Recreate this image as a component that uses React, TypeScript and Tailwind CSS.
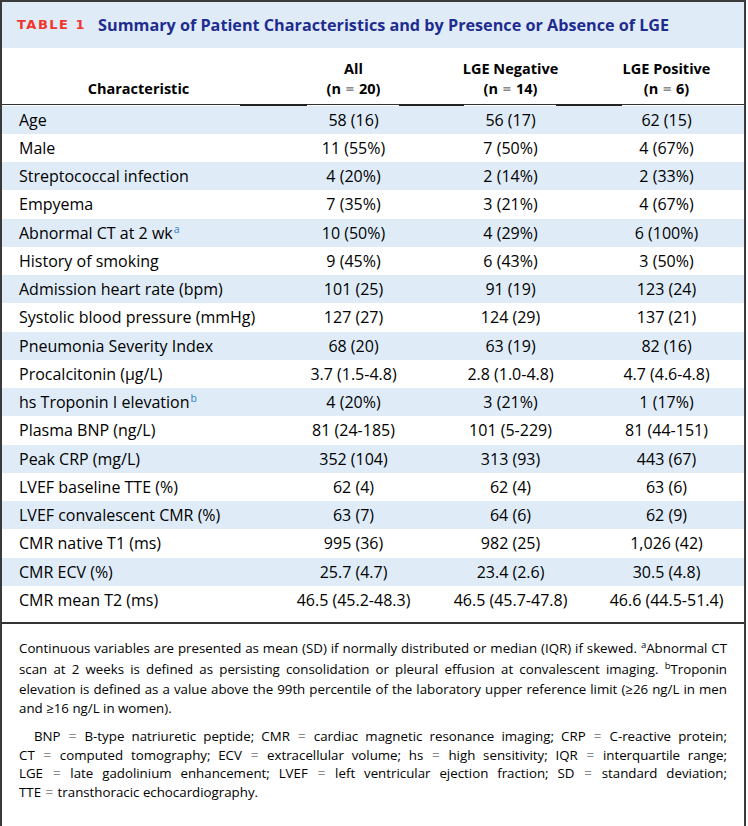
import React from "react";

const Sup = ({ c }: { c: string }) => (
  <span className="text-[10.5px] text-[#2f7fc4] relative -top-[6px] ml-[1px]">{c}</span>
);

const rows: [React.ReactNode, string, string, string][] = [
  ["Age", "58 (16)", "56 (17)", "62 (15)"],
  ["Male", "11 (55%)", "7 (50%)", "4 (67%)"],
  ["Streptococcal infection", "4 (20%)", "2 (14%)", "2 (33%)"],
  ["Empyema", "7 (35%)", "3 (21%)", "4 (67%)"],
  [
    <>
      Abnormal CT at 2 wk<Sup c="a" />
    </>,
    "10 (50%)",
    "4 (29%)",
    "6 (100%)",
  ],
  ["History of smoking", "9 (45%)", "6 (43%)", "3 (50%)"],
  ["Admission heart rate (bpm)", "101 (25)", "91 (19)", "123 (24)"],
  ["Systolic blood pressure (mmHg)", "127 (27)", "124 (29)", "137 (21)"],
  ["Pneumonia Severity Index", "68 (20)", "63 (19)", "82 (16)"],
  ["Procalcitonin (\u00b5g/L)", "3.7 (1.5-4.8)", "2.8 (1.0-4.8)", "4.7 (4.6-4.8)"],
  [
    <>
      hs Troponin I elevation<Sup c="b" />
    </>,
    "4 (20%)",
    "3 (21%)",
    "1 (17%)",
  ],
  ["Plasma BNP (ng/L)", "81 (24-185)", "101 (5-229)", "81 (44-151)"],
  ["Peak CRP (mg/L)", "352 (104)", "313 (93)", "443 (67)"],
  ["LVEF baseline TTE (%)", "62 (4)", "62 (4)", "63 (6)"],
  ["LVEF convalescent CMR (%)", "63 (7)", "64 (6)", "62 (9)"],
  ["CMR native T1 (ms)", "995 (36)", "982 (25)", "1,026 (42)"],
  ["CMR ECV (%)", "25.7 (4.7)", "23.4 (2.6)", "30.5 (4.8)"],
  ["CMR mean T2 (ms)", "46.5 (45.2-48.3)", "46.5 (45.7-47.8)", "46.6 (44.5-51.4)"],
];

const Eq = () => <span className="text-[#8a8a8a] px-[1px]">=</span>;
const FSup = ({ c }: { c: string }) => <span className="text-[9.5px] relative -top-[5px]">{c}</span>;

const J = ({ children, last = true }: { children: React.ReactNode; last?: boolean }) => (
  <div className={`whitespace-nowrap text-justify ${last ? "[text-align-last:justify]" : ""}`}>{children}</div>
);

export default function App() {
  return (
    <div
      className="w-[746px] border-2 border-[#3a3a3a] bg-white text-black"
      style={{ fontFamily: '"Open Sans", "Noto Sans", sans-serif' }}
    >
      {/* Title band */}
      <div className="h-[46px] bg-[#dfecf8] flex items-center pl-[15px] gap-[12px]">
        <span
          className="text-[#f2352b] font-bold text-[13px] tracking-[1.5px]"
          style={{ fontFamily: '"DejaVu Sans", sans-serif' }}
        >
          TABLE 1
        </span>
        <span className="text-[#1f2c8f] font-bold text-[16.2px]">
          Summary of Patient Characteristics and by Presence or Absence of LGE
        </span>
      </div>

      {/* Header row */}
      <div className="h-[55.5px] flex font-bold text-[14.5px] leading-[20px]">
        <div className="w-[273px] flex items-end justify-center pb-[5px]">Characteristic</div>
        <div className="w-[157px] flex flex-col items-center justify-end pb-[5px]">
          <span>All</span>
          <span>
            (n <Eq /> 20)
          </span>
        </div>
        <div className="w-[157px] flex flex-col items-center justify-end pb-[5px]">
          <span>LGE Negative</span>
          <span>
            (n <Eq /> 14)
          </span>
        </div>
        <div className="w-[155px] flex flex-col items-center justify-end pb-[5px]">
          <span>LGE Positive</span>
          <span>
            (n <Eq /> 6)
          </span>
        </div>
      </div>
      <div className="h-[2px] flex items-start">
        <div className="w-[238px] h-[1px] bg-[#333]" />
        <div className="w-[67px] h-[2px] bg-[#222]" />
        <div className="w-[92px] h-[1px] bg-[#333]" />
        <div className="w-[65px] h-[2px] bg-[#222]" />
        <div className="w-[92px] h-[1px] bg-[#333]" />
        <div className="w-[66px] h-[2px] bg-[#222]" />
        <div className="flex-1 h-[1px] bg-[#333]" />
      </div>

      {/* Body rows */}
      <div className="pb-[8px] border-b-2 border-[#333] text-[16px]">
        {rows.map((r, i) => (
          <div
            key={i}
            className={`h-[28.25px] flex items-center ${i % 2 === 0 ? "bg-[#dfecf8]" : "bg-white"}`}
          >
            <div className="w-[273px] pl-[17px] whitespace-nowrap">{r[0]}</div>
            <div className="w-[157px] text-center">{r[1]}</div>
            <div className="w-[157px] text-center">{r[2]}</div>
            <div className="w-[155px] text-center">{r[3]}</div>
          </div>
        ))}
      </div>

      {/* Footer */}
      <div className="px-[17px] pt-[15px] pb-[28px] text-[13.3px] leading-[18.7px]">
        <div>
          <J>
            Continuous variables are presented as mean (SD) if normally distributed or median (IQR) if skewed.{" "}
            <FSup c="a" />
            Abnormal CT
          </J>
          <J>
            scan at 2 weeks is defined as persisting consolidation or pleural effusion at convalescent imaging.{" "}
            <FSup c="b" />
            Troponin
          </J>
          <J>
            elevation is defined as a value above the 99th percentile of the laboratory upper reference limit
            ({"\u2265"}26 ng/L in men
          </J>
          <J last={false}>and {"\u2265"}16 ng/L in women).</J>
        </div>
        <div className="mt-[9px]">
          <J>
            <span className="pl-[15px]" />
            BNP <Eq /> B-type natriuretic peptide; CMR <Eq /> cardiac magnetic resonance imaging; CRP <Eq /> C-reactive
            protein;
          </J>
          <J>
            CT <Eq /> computed tomography; ECV <Eq /> extracellular volume; hs <Eq /> high sensitivity; IQR <Eq />{" "}
            interquartile range;
          </J>
          <J>
            LGE <Eq /> late gadolinium enhancement; LVEF <Eq /> left ventricular ejection fraction; SD <Eq /> standard
            deviation;
          </J>
          <J last={false}>
            TTE <Eq /> transthoracic echocardiography.
          </J>
        </div>
      </div>
    </div>
  );
}
